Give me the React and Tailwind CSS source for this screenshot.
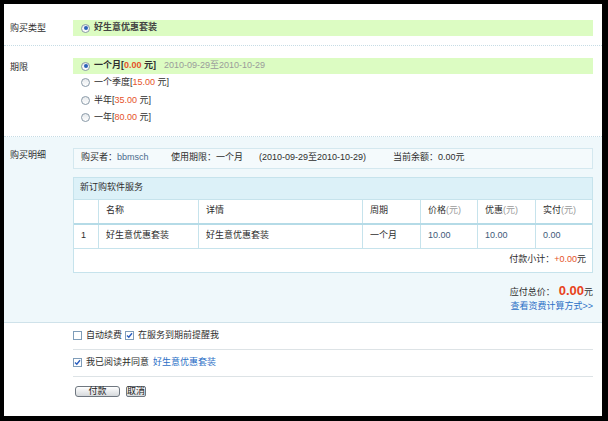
const font = { fontFamily: '"Liberation Sans", "Noto Sans CJK SC", sans-serif' };

const Radio = ({ checked }) => (
  <span className="inline-flex items-center justify-center w-[9px] h-[9px] rounded-full border border-[#8a9aa8] bg-gradient-to-b from-[#e6e9ec] to-white mr-[4px] shrink-0">
    {checked && <span className="w-[4px] h-[4px] rounded-full bg-[#2a62b8]" />}
  </span>
);

const Check = ({ checked }) => (
  <span className="inline-flex items-center justify-center w-[9px] h-[9px] border border-[#7f9db9] bg-white mr-[4px] shrink-0">
    {checked && (
      <svg width="7" height="7" viewBox="0 0 7 7">
        <path d="M1 3.5 L2.8 5.3 L6 1.2" stroke="#2a5fc0" strokeWidth="1.4" fill="none" />
      </svg>
    )}
  </span>
);

const Price = ({ v }) => (
  <span>
    [<span className="text-[#e5532a]">{v}</span> 元]
  </span>
);

const periods = [
  { name: "一个季度", v: "15.00" },
  { name: "半年", v: "35.00" },
  { name: "一年", v: "80.00" },
];

const cols = [
  { w: "w-[25px]", t: "" },
  { w: "w-[100px]", t: "名称" },
  { w: "w-[164px]", t: "详情" },
  { w: "w-[58px]", t: "周期" },
  { w: "w-[57px]", t: "价格", u: true },
  { w: "w-[58px]", t: "优惠", u: true },
  { w: "flex-1", t: "实付", u: true },
];

const row = ["1", "好生意优惠套装", "好生意优惠套装", "一个月", "10.00", "10.00", "0.00"];

export default function App() {
  return (
    <div className="w-[608px] h-[421px] bg-black pt-[4px] pl-[4px] pr-[6px] pb-[5px] text-[9px] text-[#2e2e2e]" style={font}>
      <div className="w-full h-full bg-white flex flex-col">
        {/* 购买类型 */}
        <div className="flex pt-[16px] pb-[9px] border-b border-dotted border-[#c6dce5]">
          <div className="w-[69px] pl-[6px] leading-[16px]">购买类型</div>
          <div className="flex-1 pr-[9px]">
            <div className="h-[16px] bg-[#dcfcc2] flex items-center pl-[8px] font-bold text-[#444]">
              <Radio checked />
              好生意优惠套装
            </div>
          </div>
        </div>

        {/* 期限 */}
        <div className="flex pt-[12px] pb-[9px] border-b border-dotted border-[#c6dce5]">
          <div className="w-[69px] pl-[6px] leading-[18px]">期限</div>
          <div className="flex-1 pr-[9px]">
            <div className="h-[16px] bg-[#dcfcc2] flex items-center pl-[8px]">
              <Radio checked />
              <span className="font-bold">一个月[<span className="text-[#e5532a]">0.00</span> 元]</span>
              <span className="ml-[8px] text-[#9a9a9a]">2010-09-29至2010-10-29</span>
            </div>
            {periods.map((p) => (
              <div key={p.name} className="h-[17.5px] flex items-center pl-[8px]">
                <Radio />
                {p.name}
                <Price v={p.v} />
              </div>
            ))}
          </div>
        </div>

        {/* 购买明细 */}
        <div className="flex bg-[#eff8fb] pt-[11px] h-[186px] border-b border-[#cfe2ea]">
          <div className="w-[69px] pl-[6px] leading-[14px]">购买明细</div>
          <div className="flex-1 pr-[9px] flex flex-col">
            <div className="h-[21px] border border-[#d4e8ef] bg-[#f4fafc] flex items-center pl-[7px]">
              <span className="w-[90px]">购买者：<span className="text-[#4a6a8c]">bbmsch</span></span>
              <span className="w-[88px]">使用期限：一个月</span>
              <span className="w-[134px]">(2010-09-29至2010-10-29)</span>
              <span>当前余额：0.00元</span>
            </div>
            <div className="mt-[8px] border border-[#c6e3ec] bg-white">
              <div className="h-[22px] bg-[#dcf1f8] border-b border-[#c6e3ec] flex items-center pl-[6px]">新订购软件服务</div>
              <div className="flex h-[25px] border-b-2 border-[#b5dbe7]">
                {cols.map((c, i) => (
                  <div key={i} className={`${c.w} flex items-center pl-[7px] ${i < cols.length - 1 ? "border-r border-[#c6e3ec]" : ""}`}>
                    {c.t}
                    {c.u && <span className="text-[#9a9a9a]">(元)</span>}
                  </div>
                ))}
              </div>
              <div className="flex h-[24px] border-b border-[#c6e3ec]">
                {cols.map((c, i) => (
                  <div key={i} className={`${c.w} flex items-center pl-[7px] ${i >= 4 ? "text-[#3e5a78]" : ""} ${i < cols.length - 1 ? "border-r border-[#c6e3ec]" : ""}`}>
                    {row[i]}
                  </div>
                ))}
              </div>
              <div className="h-[23px] flex items-center justify-end pr-[6px]">
                付款小计：<span className="text-[#e5532a]">+0.00</span>元
              </div>
            </div>
            <div className="flex flex-col items-end mt-[8px]">
              <div className="flex items-baseline">
                应付总价：<span className="text-[13px] font-bold text-[#e8421a] ml-[4px]">0.00</span>元
              </div>
              <a className="text-[#2b6fc6] mt-[0px]">查看资费计算方式&gt;&gt;</a>
            </div>
          </div>
        </div>

        {/* 选项 */}
        <div className="pl-[69px] pr-[9px]">
          <div className="h-[27px] flex items-center border-b border-[#dde3e6]">
            <Check />
            <span className="mr-[3px]">自动续费</span>
            <Check checked />
            在服务到期前提醒我
          </div>
          <div className="h-[27px] flex items-center border-b border-[#dde3e6]">
            <Check checked />
            我已阅读并同意
            <a className="ml-[4px] text-[#2b6fc6]">好生意优惠套装</a>
          </div>
          <div className="flex items-center gap-[6px] pt-[9px] pl-[2px]">
            <button className="w-[45px] h-[11px] leading-[9px] text-[9px] rounded-[3px] border border-[#6f7780] bg-gradient-to-b from-white to-[#d6d9dc] text-[#222]">付款</button>
            <button className="w-[20px] h-[11px] leading-[9px] text-[9px] rounded-[2px] border border-[#6f7780] bg-gradient-to-b from-white to-[#d6d9dc] text-[#222]">取消</button>
          </div>
        </div>
      </div>
    </div>
  );
}
